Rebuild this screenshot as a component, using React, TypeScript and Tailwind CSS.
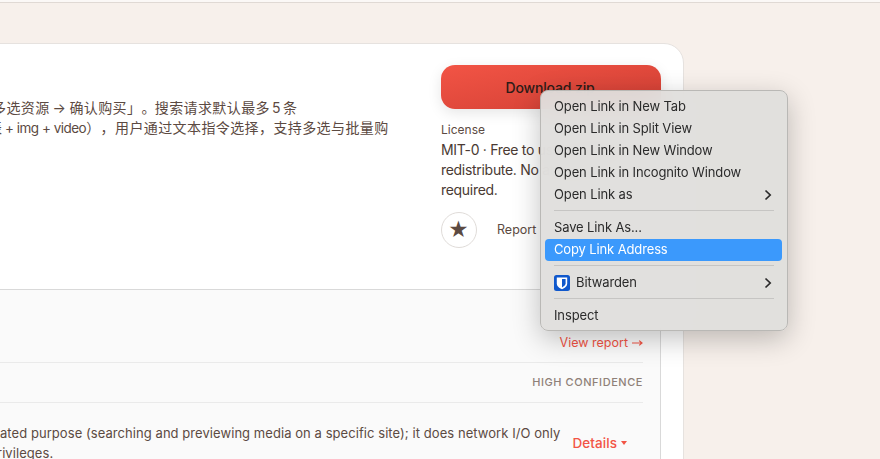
const sans = "font-['Inter','Noto_Sans_CJK_SC',sans-serif]";

function Chevron() {
  return (
    <svg width="8" height="12" viewBox="0 0 8 12" className="text-[#2a2a2a]">
      <path d="M1.5 1.5 L6.2 6 L1.5 10.5" fill="none" stroke="currentColor" strokeWidth="1.7" />
    </svg>
  );
}

function Item({ label, chevron }: { label: string; chevron?: boolean }) {
  return (
    <div className="flex h-[22px] items-center justify-between pl-[13px] pr-[15px] text-[13px] tracking-[-0.13px] text-[#2b2b2b]">
      <span>{label}</span>
      {chevron && <Chevron />}
    </div>
  );
}

function Sep() {
  return <div className="mx-[13px] mt-[4px] mb-[6px] h-px bg-[#c6c5c3]" />;
}

function ContextMenu() {
  return (
    <div className="absolute left-[540px] top-[90px] h-[241px] w-[248px] rounded-[8px] border border-[#b9b8b5] bg-[#dfdedc]/95 pt-[5px] font-['Inter',sans-serif] shadow-[0_8px_28px_rgba(0,0,0,0.24)] backdrop-blur-md">
      <Item label="Open Link in New Tab" />
      <Item label="Open Link in Split View" />
      <Item label="Open Link in New Window" />
      <Item label="Open Link in Incognito Window" />
      <Item label="Open Link as" chevron />
      <Sep />
      <Item label="Save Link As..." />
      <div className="ml-[4px] mr-[5px] flex h-[22px] items-center rounded-[4px] bg-[#3b99fc] px-[9px] text-[13px] tracking-[-0.13px] text-white">
        Copy Link Address
      </div>
      <Sep />
      <div className="flex h-[22px] items-center justify-between pl-[13px] pr-[15px] text-[13px] tracking-[-0.13px] text-[#2b2b2b]">
        <span className="flex items-center gap-[6px]">
          <svg width="16" height="16" viewBox="0 0 16 16">
            <rect width="16" height="16" rx="2.5" fill="#1058cc" />
            <path d="M2.8 2.4 H13.2 V8.4 C13.2 11.2 10.6 12.9 8 14.2 C5.4 12.9 2.8 11.2 2.8 8.4 Z" fill="#fff" />
            <path d="M8 3.9 H11.6 V8.3 C11.6 10.2 9.8 11.5 8 12.4 Z" fill="#1058cc" />
          </svg>
          Bitwarden
        </span>
        <Chevron />
      </div>
      <Sep />
      <Item label="Inspect" />
    </div>
  );
}

export default function App() {
  return (
    <div className={`relative h-[459px] w-[880px] overflow-hidden bg-[#f7f0eb] ${sans}`}>
      <div className="h-[3px] border-b border-[#e0d9d4] bg-[#fbf8f6]" />
      <div className="pt-[40px]">
        <div className="-ml-[40px] h-[460px] w-[724px] overflow-hidden rounded-[20px] border border-[#e6e2df] bg-white">
          <div className="flex h-[245px]">
            <div className="w-[480px] pt-[53px] text-[14px] leading-[21px] text-[#5c4a42]">
              <div className="-ml-[1px] pl-[40px] whitespace-nowrap tracking-[0.4px]">
                <span className="-ml-[8px] inline-flex items-baseline">
                  <span>多选资源</span>
                  <span className="mx-[3px]">→</span>
                  <span>确认购买</span>
                  <span className="inline-block w-[14.4px]">」</span>
                  <span className="inline-block w-[13.4px]">。</span>
                  <span>搜索请求默认最多</span>
                  <span className="mx-[2px]">5</span>
                  <span>条</span>
                </span>
              </div>
              <div className="mt-[-1px] pl-[40px] whitespace-nowrap">
                <span className="-ml-[13px] inline-flex items-baseline">
                  <span>表</span>
                  <span className="ml-[3px] text-[13.5px] tracking-[-0.5px]">+ img + video</span>
                  <span className="inline-block w-[14.4px]">）</span>
                  <span className="inline-block w-[14.4px]">，</span>
                  <span className="tracking-[0.4px]">用户通过文本指令选择，支持多选与批量购</span>
                </span>
              </div>
            </div>
            <div className="flex-1 pr-[22px] pt-[21px]">
              <div className="flex h-[44px] items-center justify-center rounded-[14px] bg-gradient-to-br from-[#f25445] to-[#d13f34] pr-[2px] text-[14px] font-medium tracking-[-0.15px] text-[#2e1c18] shadow-[0_4px_14px_rgba(0,0,0,0.1)]">
                Download zip
              </div>
              <div className="mt-[13px] text-[12px] leading-[16px] text-[#5c4a42]">License</div>
              <div className="mt-[2px] text-[14px] leading-[20px] tracking-[-0.3px] text-[#4a3a33]">
                MIT-0 · Free to use, modify, and
                <br />
                redistribute. No attribution
                <br />
                required.
              </div>
              <div className="mt-[12px] flex items-center gap-[20px]">
                <div className="flex h-[36px] w-[36px] items-center justify-center rounded-full border border-[#e0dcd9] pr-[1px] text-[20px] leading-none text-[#5c4a42]">
                  ★
                </div>
                <span className="text-[12.5px] text-[#5c4a42]">Report</span>
              </div>
            </div>
          </div>
          <div className="mr-[22px] h-[220px] border-r border-t border-[#d9d9d9] bg-[#fafafa] pr-[17px]">
            <div className="flex h-[73px] items-end justify-end gap-[4px] border-b border-[#eaeaea] pb-[9px] text-[12.5px] text-[#f25445]">
              View report
              <svg width="11" height="8" viewBox="0 0 11 8" className="mb-[6px]">
                <path d="M0 4 H9.5 M7.2 1.6 L10 4 L7.2 6.4" fill="none" stroke="#f25445" strokeWidth="1.2" />
              </svg>
            </div>
            <div className="flex h-[40px] items-center justify-end border-b border-[#eaeaea] text-[11px] font-medium tracking-[0.55px] text-[#8f8078]">
              HIGH CONFIDENCE
            </div>
            <div className="flex justify-between pt-[20px] pl-[39px] text-[13px] leading-[20px] tracking-[0.06px] text-[#5c4a42]">
              <div className="whitespace-nowrap">
                <div>ated purpose (searching and previewing media on a specific site); it does network I/O only</div>
                <div className="-ml-[3px]">rivileges.</div>
              </div>
              <span className="mt-[10px] mr-[16px] flex items-center gap-[4px] self-start text-[13.5px] font-medium text-[#f25445]">
                Details
                <svg width="6" height="4" viewBox="0 0 6 4">
                  <path d="M0 0 H6 L3 4 Z" fill="#f25445" />
                </svg>
              </span>
            </div>
          </div>
        </div>
      </div>
      <ContextMenu />
    </div>
  );
}
